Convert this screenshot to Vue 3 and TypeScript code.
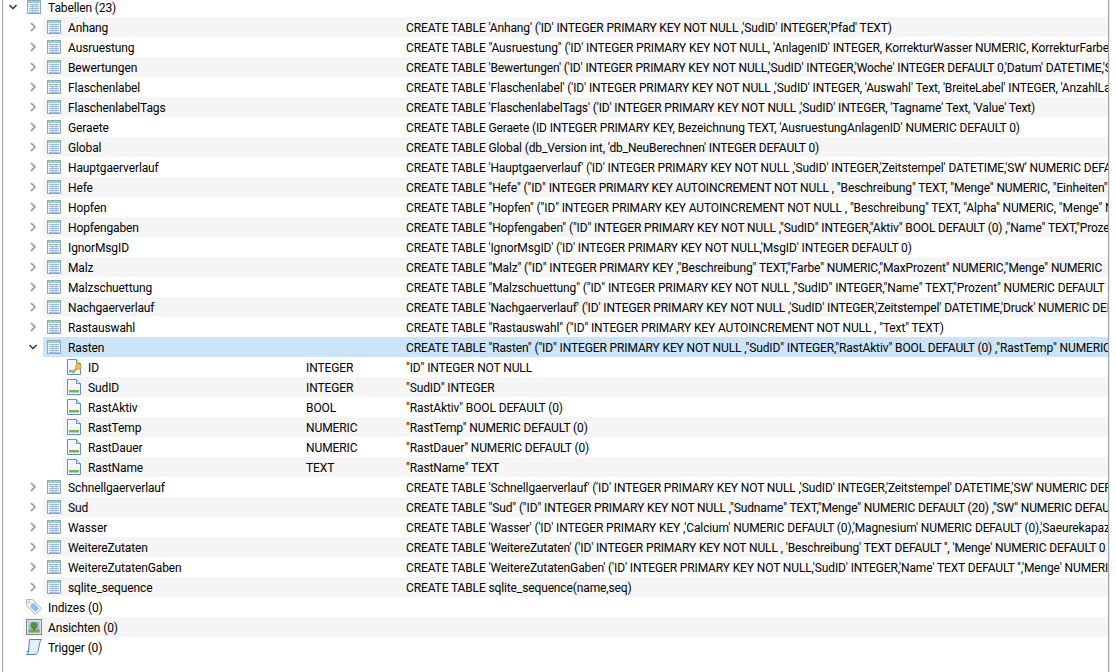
<script setup lang="ts">
interface Row { name: string; sql: string; kind: 'table' | 'sel' }
interface Col { name: string; type: string; sql: string; key?: boolean }

const before: Row[] = [
  { name: 'Anhang', sql: `CREATE TABLE 'Anhang' ('ID' INTEGER PRIMARY KEY NOT NULL ,'SudID' INTEGER,'Pfad' TEXT)`, kind: 'table' },
  { name: 'Ausruestung', sql: `CREATE TABLE "Ausruestung" ('ID' INTEGER PRIMARY KEY NOT NULL, 'AnlagenID' INTEGER, KorrekturWasser NUMERIC, KorrekturFarbe NUMERIC`, kind: 'table' },
  { name: 'Bewertungen', sql: `CREATE TABLE 'Bewertungen' ('ID' INTEGER PRIMARY KEY NOT NULL,'SudID' INTEGER,'Woche' INTEGER DEFAULT 0,'Datum' DATETIME,'Sterne' INTEGER`, kind: 'table' },
  { name: 'Flaschenlabel', sql: `CREATE TABLE 'Flaschenlabel' ('ID' INTEGER PRIMARY KEY NOT NULL ,'SudID' INTEGER, 'Auswahl' Text, 'BreiteLabel' INTEGER, 'AnzahlLabels' INTEGER`, kind: 'table' },
  { name: 'FlaschenlabelTags', sql: `CREATE TABLE 'FlaschenlabelTags' ('ID' INTEGER PRIMARY KEY NOT NULL ,'SudID' INTEGER, 'Tagname' Text, 'Value' Text)`, kind: 'table' },
  { name: 'Geraete', sql: `CREATE TABLE Geraete (ID INTEGER PRIMARY KEY, Bezeichnung TEXT, 'AusruestungAnlagenID' NUMERIC DEFAULT 0)`, kind: 'table' },
  { name: 'Global', sql: `CREATE TABLE Global (db_Version int, 'db_NeuBerechnen' INTEGER DEFAULT 0)`, kind: 'table' },
  { name: 'Hauptgaerverlauf', sql: `CREATE TABLE 'Hauptgaerverlauf' ('ID' INTEGER PRIMARY KEY NOT NULL ,'SudID' INTEGER,'Zeitstempel' DATETIME,'SW' NUMERIC DEFAULT 0`, kind: 'table' },
  { name: 'Hefe', sql: `CREATE TABLE "Hefe" ("ID" INTEGER PRIMARY KEY AUTOINCREMENT NOT NULL , "Beschreibung" TEXT, "Menge" NUMERIC, "Einheiten" INTEGER`, kind: 'table' },
  { name: 'Hopfen', sql: `CREATE TABLE "Hopfen" ("ID" INTEGER PRIMARY KEY AUTOINCREMENT NOT NULL , "Beschreibung" TEXT, "Alpha" NUMERIC, "Menge" NUMERIC`, kind: 'table' },
  { name: 'Hopfengaben', sql: `CREATE TABLE "Hopfengaben" ("ID" INTEGER PRIMARY KEY NOT NULL ,"SudID" INTEGER,"Aktiv" BOOL DEFAULT (0) ,"Name" TEXT,"Prozent" NUMERIC`, kind: 'table' },
  { name: 'IgnorMsgID', sql: `CREATE TABLE 'IgnorMsgID' ('ID' INTEGER PRIMARY KEY NOT NULL,'MsgID' INTEGER DEFAULT 0)`, kind: 'table' },
  { name: 'Malz', sql: `CREATE TABLE "Malz" ("ID" INTEGER PRIMARY KEY ,"Beschreibung" TEXT,"Farbe" NUMERIC,"MaxProzent" NUMERIC,"Menge" NUMERIC`, kind: 'table' },
  { name: 'Malzschuettung', sql: `CREATE TABLE "Malzschuettung" ("ID" INTEGER PRIMARY KEY NOT NULL ,"SudID" INTEGER,"Name" TEXT,"Prozent" NUMERIC DEFAULT (0)`, kind: 'table' },
  { name: 'Nachgaerverlauf', sql: `CREATE TABLE 'Nachgaerverlauf' ('ID' INTEGER PRIMARY KEY NOT NULL ,'SudID' INTEGER,'Zeitstempel' DATETIME,'Druck' NUMERIC DEFAULT 0`, kind: 'table' },
  { name: 'Rastauswahl', sql: `CREATE TABLE "Rastauswahl" ("ID" INTEGER PRIMARY KEY AUTOINCREMENT NOT NULL , "Text" TEXT)`, kind: 'table' },
]
const rasten: Row = { name: 'Rasten', sql: `CREATE TABLE "Rasten" ("ID" INTEGER PRIMARY KEY NOT NULL ,"SudID" INTEGER,"RastAktiv" BOOL DEFAULT (0) ,"RastTemp" NUMERIC DEFAULT (0)`, kind: 'sel' }
const columns: Col[] = [
  { name: 'ID', type: 'INTEGER', sql: `"ID" INTEGER NOT NULL`, key: true },
  { name: 'SudID', type: 'INTEGER', sql: `"SudID" INTEGER` },
  { name: 'RastAktiv', type: 'BOOL', sql: `"RastAktiv" BOOL DEFAULT (0)` },
  { name: 'RastTemp', type: 'NUMERIC', sql: `"RastTemp" NUMERIC DEFAULT (0)` },
  { name: 'RastDauer', type: 'NUMERIC', sql: `"RastDauer" NUMERIC DEFAULT (0)` },
  { name: 'RastName', type: 'TEXT', sql: `"RastName" TEXT` },
]
const after: Row[] = [
  { name: 'Schnellgaerverlauf', sql: `CREATE TABLE 'Schnellgaerverlauf' ('ID' INTEGER PRIMARY KEY NOT NULL ,'SudID' INTEGER,'Zeitstempel' DATETIME,'SW' NUMERIC DEFAULT 0`, kind: 'table' },
  { name: 'Sud', sql: `CREATE TABLE "Sud" ("ID" INTEGER PRIMARY KEY NOT NULL ,"Sudname" TEXT,"Menge" NUMERIC DEFAULT (20) ,"SW" NUMERIC DEFAULT (12)`, kind: 'table' },
  { name: 'Wasser', sql: `CREATE TABLE 'Wasser' ('ID' INTEGER PRIMARY KEY ,'Calcium' NUMERIC DEFAULT (0),'Magnesium' NUMERIC DEFAULT (0),'Saeurekapazitaet' NUMERIC`, kind: 'table' },
  { name: 'WeitereZutaten', sql: `CREATE TABLE 'WeitereZutaten' ('ID' INTEGER PRIMARY KEY NOT NULL , 'Beschreibung' TEXT DEFAULT '', 'Menge' NUMERIC DEFAULT 0`, kind: 'table' },
  { name: 'WeitereZutatenGaben', sql: `CREATE TABLE 'WeitereZutatenGaben' ('ID' INTEGER PRIMARY KEY NOT NULL,'SudID' INTEGER,'Name' TEXT DEFAULT '','Menge' NUMERIC DEFAULT 0`, kind: 'table' },
  { name: 'sqlite_sequence', sql: `CREATE TABLE sqlite_sequence(name,seq)`, kind: 'table' },
]
</script>

<template>
  <div class="tree">
    <svg width="0" height="0" class="defs">
      <defs>
        <symbol id="tbl" viewBox="0 0 16 16">
          <rect x="1.500" y="1.500" width="13" height="13" fill="#f2f6fc" stroke="#86a8d4" />
          <rect x="2" y="2" width="12" height="2" fill="#a5d58f" />
          <path d="M3 5.500h10M3 7.500h10M3 9.500h10M3 11.500h10M3 13.500h10M6.500 5v8.500M10 5v8.500" stroke="#9dbbe3" fill="none" />
        </symbol>
        <symbol id="col" viewBox="0 0 16 16">
          <path d="M1.500 .5h9l4 4v11h-13z" fill="#f5f9fd" stroke="#5b93c6" />
          <path d="M10.500 .5v4h4" fill="#dbe8f5" stroke="#5b93c6" />
          <rect x="3" y="11" width="10" height="2.500" fill="#7fb04d" />
        </symbol>
        <symbol id="keycol" viewBox="0 0 16 16">
          <path d="M1.500 .5h9l4 4v11h-13z" fill="#f5f9fd" stroke="#5b93c6" />
          <path d="M10.500 .5v4h4" fill="#dbe8f5" stroke="#5b93c6" />
          <rect x="3" y="11" width="6" height="2.500" fill="#6fb1e6" />
          <circle cx="12.500" cy="7.500" r="2.800" fill="#f3c14c" stroke="#b98a25" stroke-width=".7" />
          <path d="M10.800 9.200 6.500 14" stroke="#d9a332" stroke-width="2.400" fill="none" />
        </symbol>
        <symbol id="tag" viewBox="0 0 16 16">
          <path d="M.5 .5h6l9 9-6 6-9-9z" fill="#f3f3f3" stroke="#b4b4b4" />
          <path d="M5 5l3-1 5 5.500-3.500 3.500-5-5z" fill="#8cc0ec" />
          <circle cx="3" cy="3" r="1.100" fill="#fff" stroke="#999" stroke-width=".5" />
        </symbol>
        <symbol id="view" viewBox="0 0 16 16">
          <rect x=".5" y=".5" width="15" height="15" fill="#d8e3ef" stroke="#76879a" />
          <rect x="2.500" y="2.500" width="11" height="11" fill="#9cc2e2" />
          <rect x="2.500" y="10.500" width="11" height="3" fill="#7fa648" />
          <circle cx="8" cy="6.500" r="3.500" fill="#55913a" />
          <rect x="7.200" y="8.500" width="1.600" height="3" fill="#76582e" />
        </symbol>
        <symbol id="scroll" viewBox="0 0 16 16">
          <path d="M3.500 .5h12c-1.500 1-1.500 2.500-2 5l-1.500 7c-.5 1.500-1 2.500-2.500 3h-9c1.500-.5 1.800-1.500 2-3z" fill="#e4eefb" stroke="#4f7fc0" />
          <path d="M.5 12.500h2" stroke="#4f7fc0" fill="none" />
        </symbol>
      </defs>
    </svg>

    <div class="row d0">
      <span class="twist"><svg viewBox="0 0 10 10"><path d="M1.500 3l3.500 3.500 3.500-3.500" /></svg></span>
      <svg class="ico"><use href="#tbl" /></svg>
      <span class="label">Tabellen (23)</span>
    </div>

    <div v-for="r in before" :key="r.name" class="row d1">
      <span class="twist closed"><svg viewBox="0 0 10 10"><path d="M3 1l4 4-4 4" /></svg></span>
      <div class="band">
        <svg class="ico"><use href="#tbl" /></svg>
        <span class="label name1">{{ r.name }}</span>
        <span class="sql">{{ r.sql }}</span>
      </div>
    </div>

    <div class="row d1 sel">
      <span class="twist"><svg viewBox="0 0 10 10"><path d="M1.500 3l3.500 3.500 3.500-3.500" /></svg></span>
      <div class="band">
        <svg class="ico"><use href="#tbl" /></svg>
        <span class="label name1">{{ rasten.name }}</span>
        <span class="sql">{{ rasten.sql }}</span>
      </div>
    </div>

    <div v-for="c in columns" :key="c.name" class="row d2">
      <div class="band">
        <svg class="ico"><use :href="c.key ? '#keycol' : '#col'" /></svg>
        <span class="label name2">{{ c.name }}</span>
        <span class="type">{{ c.type }}</span>
        <span class="sql">{{ c.sql }}</span>
      </div>
    </div>

    <div v-for="r in after" :key="r.name" class="row d1">
      <span class="twist closed"><svg viewBox="0 0 10 10"><path d="M3 1l4 4-4 4" /></svg></span>
      <div class="band">
        <svg class="ico"><use href="#tbl" /></svg>
        <span class="label name1">{{ r.name }}</span>
        <span class="sql">{{ r.sql }}</span>
      </div>
    </div>

    <div class="row d0 leaf">
      <div class="band">
        <svg class="ico"><use href="#tag" /></svg>
        <span class="label">Indizes (0)</span>
      </div>
    </div>
    <div class="row d0 leaf">
      <div class="band">
        <svg class="ico"><use href="#view" /></svg>
        <span class="label">Ansichten (0)</span>
      </div>
    </div>
    <div class="row d0 leaf">
      <div class="band">
        <svg class="ico"><use href="#scroll" /></svg>
        <span class="label">Trigger (0)</span>
      </div>
    </div>
  </div>
</template>

<style>
html, body { margin: 0; background: #fff; overflow: hidden; }
</style>

<style scoped>
.tree {
  box-sizing: border-box;
  width: 1107px;
  height: 675px;
  margin: -3px 0 0 2px;
  border-left: 1px solid #a0a0a0;
  border-right: 1px solid #a0a0a0;
  box-shadow: 1px 0 0 #ededed;
  overflow: hidden;
  font: 12px Roboto, "Liberation Sans", sans-serif;
  color: #000;
}
.defs { position: absolute; }
.row { display: flex; align-items: center; height: 20px; white-space: nowrap; }
.band { flex: 1; min-width: 0; height: 20px; display: flex; align-items: center; overflow: hidden; }
.row:nth-child(odd) .band { background: #f5f5f5; }
.d1 { padding-left: 20px; }
.d2 { padding-left: 60px; }
.d0.leaf { padding-left: 20px; }
.twist { width: 20px; height: 20px; flex: none; display: flex; align-items: center; justify-content: center; }
.twist svg { width: 10px; height: 10px; fill: none; stroke: #404040; stroke-width: 1.6; }
.twist.closed svg { stroke: #a6a6a6; stroke-width: 1.9; }
.ico { width: 16px; height: 16px; flex: none; margin-left: 3px; }
.label { margin: 2px 0 0 6px; letter-spacing: -0.12px; }
.name1 { width: 338px; flex: none; }
.name2 { width: 218px; flex: none; }
.type { width: 100px; flex: none; margin-top: 2px; letter-spacing: -0.1px; }
.sql { flex: none; margin-top: 2px; letter-spacing: -0.125px; }
.row.sel .band { background: #cce4f7; }
</style>
